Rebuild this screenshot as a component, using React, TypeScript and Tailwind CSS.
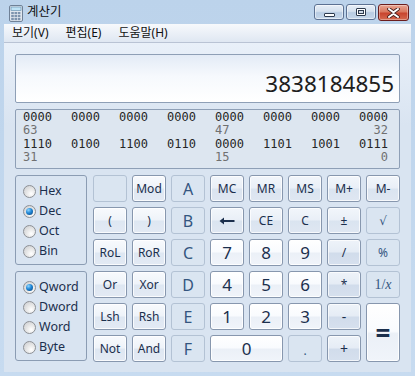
import React from 'react';

type Kind = 'num' | 'fn' | 'op' | 'mem' | 'off';

interface KeyDef {
  label: React.ReactNode;
  kind: Kind;
  className?: string;
}

const ui = "font-['Noto_Sans','Noto_Sans_CJK_KR',sans-serif]";

const kindClass: Record<Kind, string> = {
  num: 'border-[#8797ae] text-[#1b2f4d] bg-[linear-gradient(to_bottom,#ffffff_0%,#f9fbfe_48%,#ebf0f7_52%,#f0f4fa_100%)] shadow-[inset_0_0_0_1px_rgba(255,255,255,0.85)]',
  fn: 'border-[#8797ae] text-[#1b2f4d] bg-[linear-gradient(to_bottom,#f8fafd_0%,#eef3f9_48%,#dee7f2_52%,#e3eaf4_100%)] shadow-[inset_0_0_0_1px_rgba(255,255,255,0.8)]',
  mem: 'border-[#8797ae] text-[#1b2f4d] bg-[linear-gradient(to_bottom,#f2f6fb_0%,#e9eff7_48%,#dae4f0_52%,#dfe7f2_100%)] shadow-[inset_0_0_0_1px_rgba(255,255,255,0.75)]',
  op: 'border-[#8797ae] text-[#1b2f4d] bg-[linear-gradient(to_bottom,#eef3f9_0%,#e5ecf5_48%,#d1dceb_52%,#d6e0ee_100%)] shadow-[inset_0_0_0_1px_rgba(255,255,255,0.7)]',
  off: 'border-[#b3c2d4] text-[#34557f] bg-[#dae5f1]',
};

const keys: KeyDef[] = [
  { label: '', kind: 'off' },
  { label: 'Mod', kind: 'fn', className: 'text-[12px]' },
  { label: 'A', kind: 'off', className: 'text-[16px]' },
  { label: 'MC', kind: 'mem', className: 'text-[12px]' },
  { label: 'MR', kind: 'mem', className: 'text-[12px]' },
  { label: 'MS', kind: 'mem', className: 'text-[12px]' },
  { label: 'M+', kind: 'mem', className: 'text-[12px]' },
  { label: 'M-', kind: 'mem', className: 'text-[12px]' },

  { label: '(', kind: 'fn', className: 'text-[12px]' },
  { label: ')', kind: 'fn', className: 'text-[12px]' },
  { label: 'B', kind: 'off', className: 'text-[16px]' },
  {
    label: (
      <svg width="16" height="8" viewBox="0 0 16 8">
        <path d="M0.5 4 L5 0.5 L5 3 L15.5 3 L15.5 5 L5 5 L5 7.5 Z" fill="#1b2f4d" />
      </svg>
    ),
    kind: 'mem',
  },
  { label: 'CE', kind: 'mem', className: 'text-[12px]' },
  { label: 'C', kind: 'mem', className: 'text-[12px]' },
  { label: '±', kind: 'mem', className: 'text-[12px]' },
  { label: '√', kind: 'off', className: "text-[12px] font-['DejaVu_Sans',sans-serif]" },

  { label: 'RoL', kind: 'fn', className: 'text-[12px]' },
  { label: 'RoR', kind: 'fn', className: 'text-[12px]' },
  { label: 'C', kind: 'off', className: 'text-[16px]' },
  { label: '7', kind: 'num', className: 'text-[17px]' },
  { label: '8', kind: 'num', className: 'text-[17px]' },
  { label: '9', kind: 'num', className: 'text-[17px]' },
  { label: '/', kind: 'op', className: 'text-[12px]' },
  { label: '%', kind: 'off', className: 'text-[12px]' },

  { label: 'Or', kind: 'fn', className: 'text-[12px]' },
  { label: 'Xor', kind: 'fn', className: 'text-[12px]' },
  { label: 'D', kind: 'off', className: 'text-[16px]' },
  { label: '4', kind: 'num', className: 'text-[17px]' },
  { label: '5', kind: 'num', className: 'text-[17px]' },
  { label: '6', kind: 'num', className: 'text-[17px]' },
  { label: '*', kind: 'op', className: 'text-[12px]' },
  {
    label: (
      <span className="font-['Liberation_Serif',serif] text-[14px]">
        1/<i>x</i>
      </span>
    ),
    kind: 'off',
  },

  { label: 'Lsh', kind: 'fn', className: 'text-[12px]' },
  { label: 'Rsh', kind: 'fn', className: 'text-[12px]' },
  { label: 'E', kind: 'off', className: 'text-[16px]' },
  { label: '1', kind: 'num', className: 'text-[17px]' },
  { label: '2', kind: 'num', className: 'text-[17px]' },
  { label: '3', kind: 'num', className: 'text-[17px]' },
  { label: '-', kind: 'op', className: 'text-[14px]' },
  { label: '=', kind: 'num', className: 'row-span-2 text-[26px] font-bold' },

  { label: 'Not', kind: 'fn', className: 'text-[12px]' },
  { label: 'And', kind: 'fn', className: 'text-[12px]' },
  { label: 'F', kind: 'off', className: 'text-[16px]' },
  { label: '0', kind: 'num', className: 'col-span-2 text-[17px]' },
  { label: '.', kind: 'off', className: 'text-[12px] items-end pb-[4px]' },
  { label: '+', kind: 'op', className: 'text-[14px]' },
];

function Radio({ label, checked }: { label: string; checked?: boolean }) {
  return (
    <div className="flex h-[20px] items-center gap-[3px]">
      <span className="flex h-[13px] w-[13px] items-center justify-center rounded-full border border-[#8d9095] bg-[radial-gradient(circle_at_65%_70%,#ffffff_0%,#e6e6e6_45%,#c9cbcf_100%)]">
        {checked && (
          <span className="h-[7px] w-[7px] rounded-full bg-[radial-gradient(circle_at_35%_30%,#8fd6ff_0%,#1f86d6_45%,#0b3f74_100%)]" />
        )}
      </span>
      <span className="text-[12.5px] leading-none text-[#1b2f4d]">{label}</span>
    </div>
  );
}

function Group({ items, selected }: { items: string[]; selected: string }) {
  return (
    <div className="h-[90px] rounded-[3px] border border-[#8b9cb3] pl-[7px] pt-[5px]">
      {items.map((it) => (
        <Radio key={it} label={it} checked={it === selected} />
      ))}
    </div>
  );
}

const bits1 = ['0000', '0000', '0000', '0000', '0000', '0000', '0000', '0000'];
const bits2 = ['1110', '0100', '1100', '0110', '0000', '1101', '1001', '0111'];

function BitRows({ bits, idx }: { bits: string[]; idx: [string, string, string] }) {
  return (
    <>
      <div className="grid grid-cols-[repeat(7,48px)_auto] text-[#262626]">
        {bits.map((b, i) => (
          <span key={i}>{b}</span>
        ))}
      </div>
      <div className="grid grid-cols-[repeat(7,48px)_29px] text-[#707070]">
        <span className="col-start-1">{idx[0]}</span>
        <span className="col-start-5">{idx[1]}</span>
        <span className="col-start-8 text-right">{idx[2]}</span>
      </div>
    </>
  );
}

function CalcIcon() {
  return (
    <svg width="16" height="17" viewBox="0 0 16 17">
      <rect x="1.5" y="0.5" width="13" height="16" rx="1.5" fill="#dfe6ee" stroke="#6f8197" />
      <rect x="3" y="2" width="10" height="3.5" fill="#bfe3f6" stroke="#5c87a8" strokeWidth="0.6" />
      {[0, 1, 2].map((r) =>
        [0, 1, 2].map((c) => (
          <rect key={`${r}-${c}`} x={3.2 + c * 3.3} y={7 + r * 3} width="2.6" height="2.2" fill="#7d93ad" />
        ))
      )}
    </svg>
  );
}

function CaptionButton({ kind }: { kind: 'min' | 'max' | 'close' }) {
  if (kind === 'close') {
    return (
      <div className="flex h-[17px] w-[31px] items-center justify-center rounded-[3px] border border-[#6b1d1d] bg-[linear-gradient(to_bottom,#e8a593_0%,#d9785f_45%,#c8452f_55%,#d46a4f_100%)] shadow-[inset_0_0_0_1px_rgba(255,255,255,0.35)]">
        <svg width="13" height="10" viewBox="0 0 13 10">
          <path d="M2 1 L6.5 4.2 L11 1 M2 9 L6.5 5.8 L11 9" stroke="#3d1a1a" strokeWidth="3.6" fill="none" strokeLinecap="round" />
          <path d="M2 1 L6.5 4.2 L11 1 M2 9 L6.5 5.8 L11 9" stroke="#ffffff" strokeWidth="2" fill="none" strokeLinecap="round" />
        </svg>
      </div>
    );
  }
  return (
    <div className="flex h-[16px] w-[30px] items-center justify-center rounded-[3px] border border-[#5c7192] bg-[linear-gradient(to_bottom,#e7eef7_0%,#d5e1ee_45%,#b8cce3_55%,#c6d7ea_100%)] shadow-[inset_0_0_0_1px_rgba(255,255,255,0.5)]">
      {kind === 'min' ? (
        <span className="mt-[5px] h-[4px] w-[11px] rounded-[1px] border border-[#2e3b4e] bg-white" />
      ) : (
        <span className="h-[8px] w-[10px] rounded-[1px] border border-[#2e3b4e] bg-white p-[1px]">
          <span className="block h-full w-full border border-[#2e3b4e] bg-[#cfd9e6]" />
        </span>
      )}
    </div>
  );
}

export default function App() {
  return (
    <div className={`h-[376px] w-[415px] overflow-hidden bg-[linear-gradient(to_bottom,#bcd3eb,#c7dbf0)] ${ui}`}>
      {/* title bar */}
      <div className="flex h-[24px] items-start">
        <div className="ml-[8px] mt-[5px]">
          <CalcIcon />
        </div>
        <span className="ml-[3px] mt-[5px] text-[12.5px] leading-[14px] text-[#101010]">계산기</span>
        <div className="ml-auto mr-[6px] mt-[4px] flex gap-[2px]">
          <CaptionButton kind="min" />
          <CaptionButton kind="max" />
          <CaptionButton kind="close" />
        </div>
      </div>

      {/* client */}
      <div className="mx-[4px] w-[407px]">
        <div className="flex h-[19px] items-center gap-[17px] border-b border-[#b9c3d4] bg-[linear-gradient(to_bottom,#f7f9fc,#dfe7f2)] pl-[8px] text-[12px] text-[#101010]">
          <span>보기(V)</span>
          <span>편집(E)</span>
          <span>도움말(H)</span>
        </div>

        <div className="flex h-[329px] flex-col bg-[linear-gradient(to_bottom,#e9f0f9_0%,#d9e4f1_25%,#d9e4f1_100%)] px-[11px] pt-[11px]">
          {/* display */}
          <div className="flex h-[49px] items-end justify-end rounded-[2px] border border-[#8e9fb6] bg-[linear-gradient(to_bottom,#e3ebf6_0%,#f6f9fd_45%,#ffffff_100%)] pb-[7px] pr-[5px]">
            <span className="text-[22.5px] leading-none text-[#1e1e1e]">3838184855</span>
          </div>

          {/* bits */}
          <div className="mt-[6px] h-[60px] rounded-[2px] border border-[#8e9fb6] bg-[#dde6f0] pl-[7px] pt-[1px] font-['DejaVu_Sans_Mono',monospace] text-[12px] leading-[13.3px]">
            <BitRows bits={bits1} idx={['63', '47', '32']} />
            <BitRows bits={bits2} idx={['31', '15', '0']} />
          </div>

          {/* keypad */}
          <div className="mt-[6px] flex gap-[6px]">
            <div className="flex w-[73px] flex-col gap-[6px]">
              <Group items={['Hex', 'Dec', 'Oct', 'Bin']} selected="Dec" />
              <Group items={['Qword', 'Dword', 'Word', 'Byte']} selected="Qword" />
            </div>
            <div className="grid grid-cols-[repeat(8,34px)] grid-rows-[repeat(6,27px)] gap-[5px]">
              {keys.map((k, i) => (
                <div
                  key={i}
                  className={`flex items-center justify-center rounded-[3px] border leading-none ${kindClass[k.kind]} ${k.className || ''}`}
                >
                  {k.label}
                </div>
              ))}
            </div>
          </div>
        </div>
      </div>
    </div>
  );
}
